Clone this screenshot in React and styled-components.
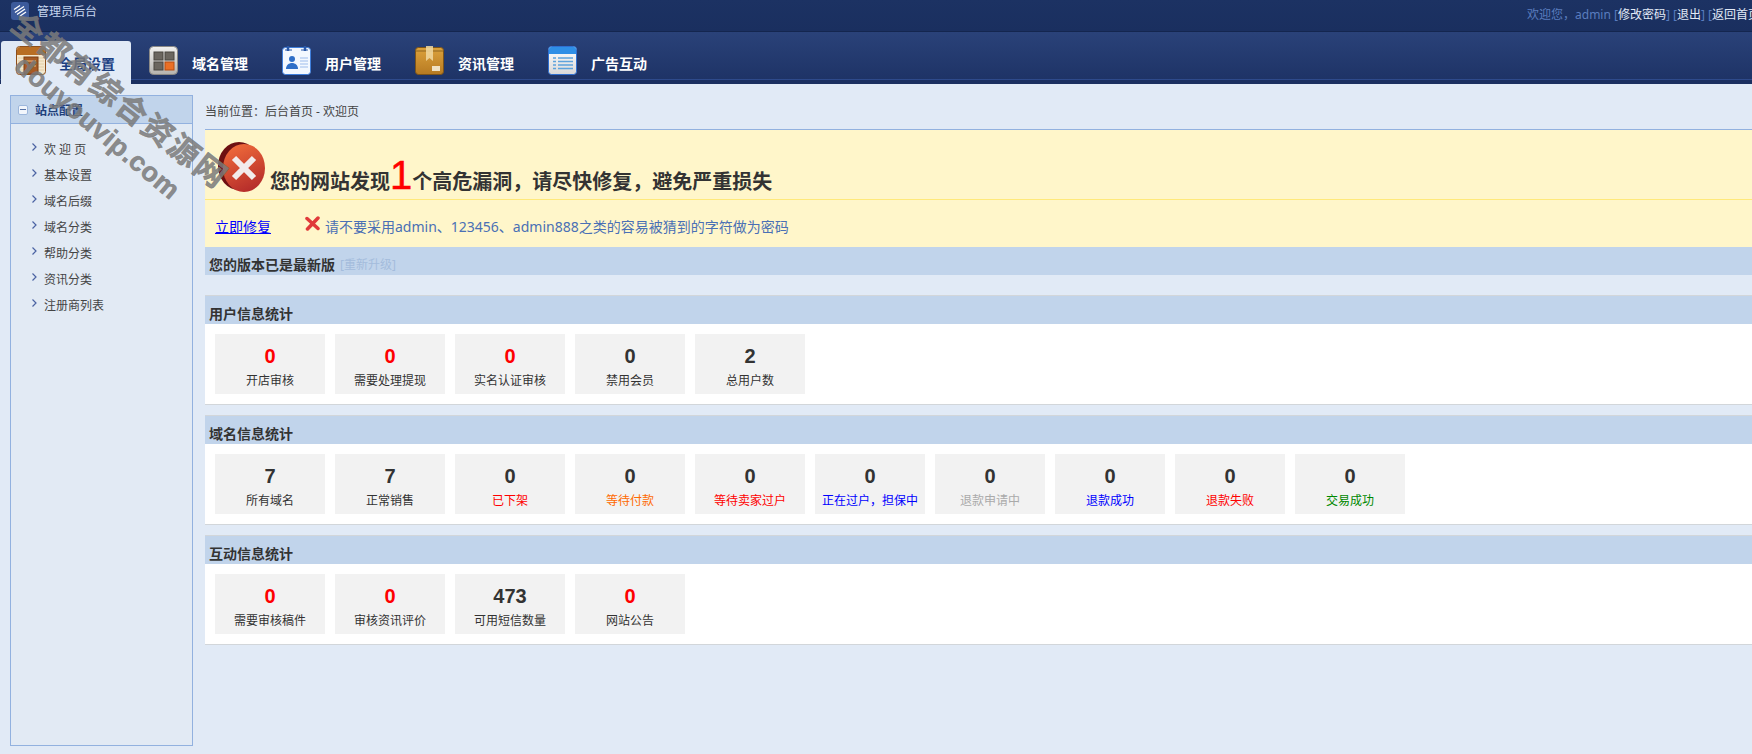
import React from "react";
import styled, { createGlobalStyle } from "styled-components";

const GlobalStyle = createGlobalStyle`
  html, body {
    margin: 0;
    padding: 0;
    height: 754px;
    overflow: hidden;
    background: #e1eaf6;
    font-family: "Noto Sans", "Noto Sans CJK SC", sans-serif;
    font-size: 12px;
    color: #333;
  }
  * { box-sizing: border-box; }
`;

const Page = styled.div`
  position: relative;
  width: 1752px;
  height: 754px;
  overflow: hidden;
`;

const TopBar = styled.div`
  height: 32px;
  display: flex;
  justify-content: space-between;
  background: linear-gradient(#1c3263, #1a2f5f);
  border-bottom: 1px solid #14264f;
`;
const Brand = styled.div`
  display: flex;
  align-items: flex-start;
  gap: 8px;
  padding: 2px 0 0 11px;
  color: #c6d6ef;
  line-height: 20px;
`;
const UserInfo = styled.div`
  flex-shrink: 0;
  margin-right: -12px;
  padding-top: 6px;
  line-height: 17px;
  color: #5a7dbf;
  white-space: nowrap;
`;
const TopLink = styled.a`
  color: #e2eaf7;
`;

const TabBar = styled.div`
  height: 52px;
  padding: 9px 0 0 1px;
  display: flex;
  gap: 3px;
  background: linear-gradient(#2a4279, #1e3366);
  border-bottom: 4px solid #1a2f60;
  box-shadow: inset 0 -1px 0 #2e4a8b;
`;
const Tab = styled.div`
  width: 130px;
  height: ${(p) => (p.$active ? "43px" : "39px")};
  padding: 5px 0 0 15px;
  display: flex;
  gap: 13px;
  border-radius: 3px 3px 0 0;
  background: ${(p) => (p.$active ? "#e1eaf6" : "transparent")};
  position: relative;
  z-index: 1;
`;
const TabText = styled.span`
  margin-top: 8px;
  font-size: 14px;
  line-height: 20px;
  font-weight: 700;
  white-space: nowrap;
  color: ${(p) => (p.$active ? "#1c3f82" : "#fff")};
`;

const Main = styled.div`
  display: flex;
  gap: 12px;
  padding: 11px 0 0 10px;
`;

const Sidebar = styled.div`
  width: 183px;
  height: 651px;
  flex-shrink: 0;
  background: #e2eaf4;
  border: 1px solid #92b1df;
`;
const SideHead = styled.div`
  height: 28px;
  display: flex;
  align-items: center;
  gap: 7px;
  padding-left: 7px;
  background: #c1d4eb;
  border-bottom: 1px solid #92b1df;
  font-weight: 700;
  color: #1f3f7a;
`;
const Collapse = styled.span`
  width: 10px;
  height: 10px;
  display: flex;
  align-items: center;
  justify-content: center;
  background: #f2f6fc;
  border: 1px solid #9db7dc;
  border-radius: 2px;
  &::before {
    content: "";
    width: 6px;
    height: 1px;
    background: #5673a8;
  }
`;
const SideList = styled.ul`
  list-style: none;
  margin: 0;
  padding: 12px 0 0 21px;
`;
const SideItem = styled.li`
  height: 26px;
  display: flex;
  align-items: center;
  gap: 7px;
  color: #444;
  white-space: pre;
  svg {
    margin-top: -4px;
  }
`;

const Content = styled.div`
  flex: 1;
  min-width: 0;
`;
const Crumb = styled.div`
  height: 35px;
  line-height: 34px;
  border-bottom: 1px solid #92b1df;
  color: #444;
`;
const Alert = styled.div`
  height: 117px;
  background: #fff6ca;
`;
const AlertHead = styled.div`
  height: 70px;
  padding: 12px 0 0 13px;
  display: flex;
  gap: 5px;
  border-bottom: 1px solid #ffe97a;
`;
const AlertTitle = styled.h1`
  margin: 9px 0 0;
  height: 58px;
  display: flex;
  align-items: baseline;
  font-size: 20px;
  line-height: 58px;
  font-weight: 700;
  color: #333;
  white-space: nowrap;
`;
const BigNum = styled.span`
  font-family: "Liberation Sans", sans-serif;
  font-size: 40px;
  line-height: 48px;
  font-weight: 400;
  -webkit-text-stroke: 0.5px #f00;
  color: #f00;
`;
const AlertRow = styled.div`
  height: 46px;
  padding: 5px 0 0 10px;
  display: flex;
  align-items: center;
  font-size: 14px;
`;
const FixLink = styled.a`
  width: 90px;
  color: #00f;
  text-decoration: underline;
`;
const Advice = styled.span`
  margin-left: 5px;
  color: #4a70b5;
`;

const VersionBar = styled.div`
  height: 28px;
  margin-bottom: 20px;
  padding: 6px 0 0 4px;
  display: flex;
  align-items: center;
  gap: 5px;
  background: #c1d4eb;
  font-size: 14px;
  font-weight: 700;
  color: #333;
`;
const Upgrade = styled.span`
  font-size: 12px;
  font-weight: 400;
  color: #a4bcdc;
`;

const Section = styled.section`
  margin-bottom: 10px;
  border-top: 1px solid #d2d6da;
  border-bottom: 1px solid #d2d6da;
`;
const SectionHead = styled.div`
  height: 28px;
  padding: 6px 0 0 4px;
  display: flex;
  align-items: center;
  background: #c1d4eb;
  font-size: 14px;
  font-weight: 700;
  color: #333;
`;
const SectionBody = styled.div`
  display: flex;
  gap: 10px;
  padding: 10px;
  background: #fff;
`;
const Card = styled.div`
  width: 110px;
  height: 60px;
  display: flex;
  flex-direction: column;
  align-items: center;
  background: #f2f2f2;
`;
const CardNum = styled.b`
  margin-top: 10px;
  font-family: "Liberation Sans", sans-serif;
  font-size: 20px;
  line-height: 24px;
  color: ${(p) => p.$color || "#333"};
`;
const CardLabel = styled.span`
  margin-top: 5px;
  line-height: 16px;
  white-space: nowrap;
  color: ${(p) => p.$color || "#333"};
`;

const Watermark = styled.div`
  position: absolute;
  left: ${(p) => p.$x}px;
  top: ${(p) => p.$y}px;
  transform: translate(-50%, -50%) rotate(${(p) => p.$deg}deg);
  white-space: nowrap;
  font-weight: 700;
  font-size: ${(p) => p.$size}px;
  letter-spacing: ${(p) => p.$spacing}px;
  line-height: 1;
  color: rgba(122, 122, 122, 0.85);
  -webkit-text-stroke: 0.6px rgba(122, 122, 122, 0.85);
  pointer-events: none;
  z-index: 5;
`;
const WatermarkUrl = styled(Watermark)`
  font-family: "Liberation Sans", sans-serif;
`;

const tabs = ["全局设置", "域名管理", "用户管理", "资讯管理", "广告互动"];
const sideItems = ["欢 迎 页", "基本设置", "域名后缀", "域名分类", "帮助分类", "资讯分类", "注册商列表"];

const sections = [
  {
    title: "用户信息统计",
    cards: [
      { num: 0, label: "开店审核", numColor: "#f00" },
      { num: 0, label: "需要处理提现", numColor: "#f00" },
      { num: 0, label: "实名认证审核", numColor: "#f00" },
      { num: 0, label: "禁用会员" },
      { num: 2, label: "总用户数" },
    ],
  },
  {
    title: "域名信息统计",
    cards: [
      { num: 7, label: "所有域名" },
      { num: 7, label: "正常销售" },
      { num: 0, label: "已下架", labelColor: "#f00" },
      { num: 0, label: "等待付款", labelColor: "#ff6a00" },
      { num: 0, label: "等待卖家过户", labelColor: "#f00" },
      { num: 0, label: "正在过户，担保中", labelColor: "#00f" },
      { num: 0, label: "退款申请中", labelColor: "#aaa" },
      { num: 0, label: "退款成功", labelColor: "#00f" },
      { num: 0, label: "退款失败", labelColor: "#f00" },
      { num: 0, label: "交易成功", labelColor: "#080" },
    ],
  },
  {
    title: "互动信息统计",
    cards: [
      { num: 0, label: "需要审核稿件", numColor: "#f00" },
      { num: 0, label: "审核资讯评价", numColor: "#f00" },
      { num: 473, label: "可用短信数量" },
      { num: 0, label: "网站公告", numColor: "#f00" },
    ],
  },
];

function Logo() {
  return (
    <svg width="18" height="18" viewBox="0 0 18 18">
      <rect width="18" height="18" rx="3" fill="#3c5a9b" />
      <path d="M3 7.500l6-4M4 10.500l9-6M6 12.500l8-5.500M9 14l6-4" stroke="#fff" strokeWidth="1.300" />
    </svg>
  );
}

function HomeIcon() {
  return (
    <svg width="30" height="30" viewBox="0 0 30 30">
      <rect x="0.5" y="0.5" width="29" height="28" rx="3" fill="#f4e7cd" stroke="#8d4f1b" />
      <path d="M1 9V4a3 3 0 0 1 3-3h22a3 3 0 0 1 3 3v5z" fill="#b86e24" />
      <path d="M2 12h26M2 15h26M2 18h26M2 21h26M2 24h26" stroke="#e3cfa6" />
      <rect x="8" y="11" width="14" height="17" fill="#a65a24" stroke="#7c3f14" />
      <rect x="10" y="14" width="10" height="2" fill="#c98a52" />
      <circle cx="19" cy="20" r="0.8" fill="#f0c890" />
    </svg>
  );
}

function GridIcon() {
  return (
    <svg width="30" height="30" viewBox="0 0 30 30">
      <defs>
        <linearGradient id="gridBg" x1="0" y1="0" x2="0" y2="1">
          <stop offset="0" stopColor="#f2f1ef" />
          <stop offset="1" stopColor="#b4b2ae" />
        </linearGradient>
      </defs>
      <rect x="0.5" y="0.5" width="28" height="28" rx="4" fill="url(#gridBg)" stroke="#8b8986" />
      <rect x="5" y="6" width="9" height="8" fill="#6b665f" stroke="#4a4640" />
      <rect x="16" y="6" width="9" height="8" fill="#6b665f" stroke="#4a4640" />
      <rect x="5" y="16" width="9" height="8" fill="#6b665f" stroke="#4a4640" />
      <rect x="16" y="16" width="9" height="8" fill="#ea6f25" stroke="#b64c10" />
    </svg>
  );
}

function UserCardIcon() {
  return (
    <svg width="30" height="30" viewBox="0 0 30 30">
      <rect x="0.5" y="1.5" width="28" height="27" rx="3" fill="#f3f8ff" stroke="#3f7fdc" />
      <path d="M6 0v5M23 0v5" stroke="#2a58a8" strokeWidth="2.5" />
      <path d="M3 4h7M19 4h7" stroke="#2a58a8" />
      <circle cx="10" cy="13" r="3" fill="#2f6fc8" />
      <path d="M4 23c0-4 3-6 6-6s6 2 6 6z" fill="#2f6fc8" />
      <path d="M18 12h8M18 15h8M18 18h8M18 21h8" stroke="#9dbcec" />
    </svg>
  );
}

function BoxIcon() {
  return (
    <svg width="30" height="30" viewBox="0 0 30 30">
      <defs>
        <linearGradient id="boxBg" x1="0" y1="0" x2="0" y2="1">
          <stop offset="0" stopColor="#dca23c" />
          <stop offset="1" stopColor="#b67a22" />
        </linearGradient>
      </defs>
      <rect x="0.5" y="1.5" width="28" height="27" rx="3" fill="url(#boxBg)" stroke="#7d5418" />
      <path d="M1 5h27" stroke="#8d6420" />
      <path d="M11 0h7v15l-3.500-3-3.500 3z" fill="#f1d9a2" opacity="0.85" />
      <rect x="17" y="20" width="8" height="5" fill="#f0e2c4" />
    </svg>
  );
}

function ListIcon() {
  return (
    <svg width="30" height="30" viewBox="0 0 30 30">
      <defs>
        <linearGradient id="listBg" x1="0" y1="0" x2="0" y2="1">
          <stop offset="0" stopColor="#fff" />
          <stop offset="1" stopColor="#d8d8d8" />
        </linearGradient>
      </defs>
      <rect x="0.5" y="0.5" width="28" height="28" rx="3" fill="url(#listBg)" stroke="#2f6fd0" />
      <path d="M1 8V3a2 2 0 0 1 2-2h23a2 2 0 0 1 2 2v5z" fill="#2f8fe6" />
      <path d="M5 12h3M10 12h15M5 15.500h3M10 15.500h15M5 19h3M10 19h15M5 22.500h3M10 22.500h15" stroke="#5ea3dc" strokeWidth="1.500" />
    </svg>
  );
}

function ErrorIcon() {
  return (
    <svg width="47" height="50" viewBox="0 0 47 50" style={{ flexShrink: 0 }}>
      <defs>
        <linearGradient id="errBg" x1="0.3" y1="0" x2="0.7" y2="1">
          <stop offset="0" stopColor="#ef6a3a" />
          <stop offset="1" stopColor="#b32a2a" />
        </linearGradient>
      </defs>
      <ellipse cx="21" cy="24" rx="21" ry="24" fill="#6d1012" />
      <ellipse cx="26" cy="26" rx="21" ry="24" fill="url(#errBg)" />
      <path d="M16 16l20 20M36 16l-20 20" stroke="#f2ecec" strokeWidth="6" />
    </svg>
  );
}

function SmallCross() {
  return (
    <svg width="15" height="15" viewBox="0 0 15 15" style={{ marginBottom: 4 }}>
      <path d="M2 2.500l11 10M13 2l-10.500 11" stroke="#e03a3a" strokeWidth="3.500" strokeLinecap="round" />
    </svg>
  );
}

function Chevron() {
  return (
    <svg width="5" height="8" viewBox="0 0 5 8">
      <path d="M0.500 0.500l3.500 3.500-3.500 3.500" fill="none" stroke="#4b63a3" strokeWidth="1.200" />
    </svg>
  );
}

const tabIcons = [HomeIcon, GridIcon, UserCardIcon, BoxIcon, ListIcon];

export default function App() {
  return (
    <Page>
      <GlobalStyle />
      <TopBar>
        <Brand>
          <Logo />
          <span>管理员后台</span>
        </Brand>
        <UserInfo>
          欢迎您，admin [<TopLink>修改密码</TopLink>] [<TopLink>退出</TopLink>] [<TopLink>返回首页</TopLink>]
        </UserInfo>
      </TopBar>

      <TabBar>
        {tabs.map((name, i) => {
          const Icon = tabIcons[i];
          return (
            <Tab key={name} $active={i === 0}>
              <Icon />
              <TabText $active={i === 0}>{name}</TabText>
            </Tab>
          );
        })}
      </TabBar>

      <Main>
        <Sidebar>
          <SideHead>
            <Collapse />
            站点配置
          </SideHead>
          <SideList>
            {sideItems.map((item) => (
              <SideItem key={item}>
                <Chevron />
                {item}
              </SideItem>
            ))}
          </SideList>
        </Sidebar>

        <Content>
          <Crumb>当前位置：后台首页 - 欢迎页</Crumb>
          <Alert>
            <AlertHead>
              <ErrorIcon />
              <AlertTitle>
                您的网站发现<BigNum>1</BigNum>个高危漏洞，请尽快修复，避免严重损失
              </AlertTitle>
            </AlertHead>
            <AlertRow>
              <FixLink>立即修复</FixLink>
              <SmallCross />
              <Advice>请不要采用admin、123456、admin888之类的容易被猜到的字符做为密码</Advice>
            </AlertRow>
          </Alert>
          <VersionBar>
            您的版本已是最新版
            <Upgrade>[重新升级]</Upgrade>
          </VersionBar>
          {sections.map((section) => (
            <Section key={section.title}>
              <SectionHead>{section.title}</SectionHead>
              <SectionBody>
                {section.cards.map((card) => (
                  <Card key={card.label}>
                    <CardNum $color={card.numColor}>{card.num}</CardNum>
                    <CardLabel $color={card.labelColor}>{card.label}</CardLabel>
                  </Card>
                ))}
              </SectionBody>
            </Section>
          ))}
        </Content>
      </Main>

      <Watermark $x={120} $y={100} $deg={38} $size={31} $spacing={2}>全都有综合资源网</Watermark>
      <WatermarkUrl $x={97} $y={128} $deg={40} $size={27} $spacing={0.5}>douyouvip.com</WatermarkUrl>
    </Page>
  );
}
